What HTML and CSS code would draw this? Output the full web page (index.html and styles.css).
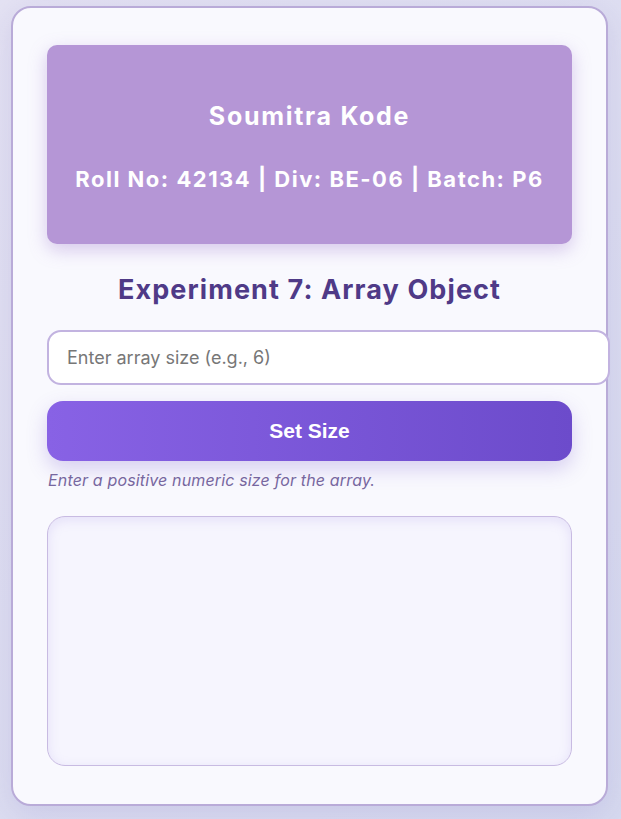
FILE: index.html
```html
<!DOCTYPE html>
<html lang="en">
<head>
<meta charset="utf-8">
<title>Experiment 7: Array Object</title>
<link rel="stylesheet" href="styles.css">
</head>
<body>
<main class="card">
  <header class="student">
    <h1 class="student-name">Soumitra Kode</h1>
    <p class="student-meta">Roll No: 42134 | Div: BE-06 | Batch: P6</p>
  </header>
  <h2 class="title">Experiment 7: Array Object</h2>
  <input class="size-input" type="text" placeholder="Enter array size (e.g., 6)">
  <button class="btn" type="button">Set Size</button>
  <p class="hint">Enter a positive numeric size for the array.</p>
  <div class="output"></div>
</main>
</body>
</html>
```
FILE: styles.css
```css
* { box-sizing: border-box; }
html, body { height: 100%; }
body {
  margin: 0;
  padding: 6px 13px 13px 11px;
  background: linear-gradient(135deg, #e4e2f3 0%, #d6d9ef 100%);
  font-family: Inter, "Open Sans", sans-serif;
}
.card {
  height: 800px;
  background: #f9f9fe;
  border: 2px solid #b9abd8;
  border-radius: 20px;
  padding: 37px 34px 38px 34px;
  box-shadow: 0 8px 30px rgba(120, 110, 190, 0.18);
  display: flex;
  flex-direction: column;
}
.student {
  height: 199px;
  flex-shrink: 0;
  background: #b596d6;
  border-radius: 10px;
  box-shadow: 0 6px 18px rgba(150, 110, 200, 0.35);
  display: flex;
  flex-direction: column;
  align-items: center;
  justify-content: center;
  padding-top: 5px;
  color: #fff;
  text-align: center;
}
.student-name {
  margin: 0 0 34px 0;
  font-size: 25px;
  font-weight: 700;
  letter-spacing: 1.7px;
  line-height: 30px;
}
.student-meta {
  margin: 0;
  font-size: 22px;
  font-weight: 700;
  letter-spacing: 1.5px;
  line-height: 28px;
}
.title {
  margin: 28px 0 22px 0;
  text-align: center;
  color: #4f3a87;
  font-size: 27px;
  font-weight: 700;
  letter-spacing: 1.1px;
  line-height: 36px;
}
.size-input {
  width: 563px;
  height: 55px;
  flex-shrink: 0;
  border: 2px solid #c2b3e0;
  border-radius: 14px;
  background: #fff;
  padding: 0 18px;
  font-family: Inter, "Open Sans", sans-serif;
  font-size: 18px;
  color: #333;
  outline: none;
}
.size-input::placeholder { color: #777; }
.btn {
  margin-top: 16px;
  height: 60px;
  flex-shrink: 0;
  width: 100%;
  border: none;
  border-radius: 16px;
  background: linear-gradient(90deg, #8862e5 0%, #6c4bcb 100%);
  color: #fff;
  font-family: "Liberation Sans", Arial, sans-serif;
  font-size: 21px;
  font-weight: 700;
  box-shadow: 0 8px 20px rgba(110, 80, 200, 0.25);
}
.hint {
  margin: 9px 0 0 1px;
  font-size: 16px;
  font-style: italic;
  letter-spacing: 0.15px;
  color: #77679f;
  line-height: 20px;
}
.output {
  margin-top: 26px;
  height: 250px;
  flex-shrink: 0;
  border: 1px solid #c8bbe2;
  border-radius: 18px;
  background: #f6f5fe;
  box-shadow: inset 0 3px 12px rgba(150, 130, 220, 0.18);
}
```
